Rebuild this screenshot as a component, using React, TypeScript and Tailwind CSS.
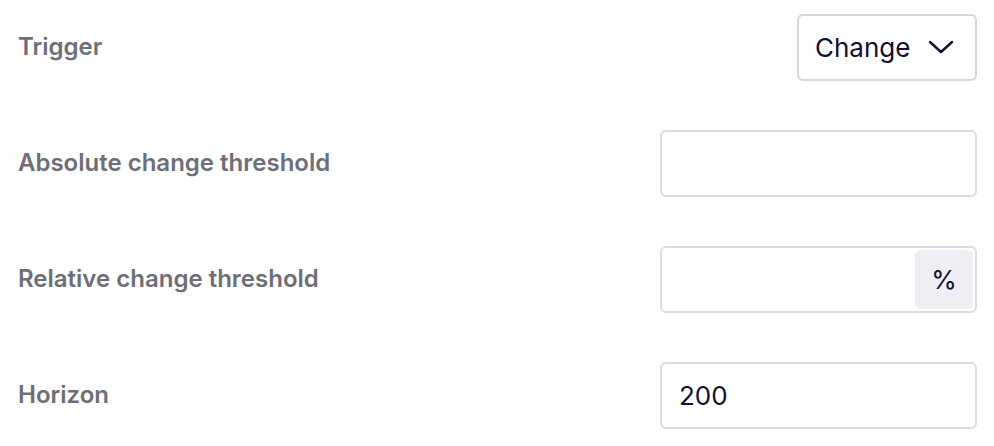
import React from "react";

const font = { fontFamily: "Inter, 'Noto Sans', sans-serif" };

function Row({ label, children }: { label: string; children: React.ReactNode }) {
  return (
    <div className="flex h-[116px] items-center justify-between">
      <div className="text-[24px] font-semibold text-[#6e6e78]">{label}</div>
      {children}
    </div>
  );
}

export default function App() {
  return (
    <div className="w-[994px] h-[446px] bg-white pl-[18px] pr-[17px]" style={font}>
      <div className="flex flex-col mt-[-11px]">
        <Row label="Trigger">
          <div className="flex h-[67px] w-[180px] items-center justify-between rounded-[6px] border-2 border-[#d6d6da] pl-[16px] pr-[21px] text-[26px] text-[#130d34]">
            <span>Change</span>
            <svg width="26" height="14" viewBox="0 0 26 14" fill="none">
              <path d="M2 2 L13 12 L24 2" stroke="#130d34" strokeWidth="2.4" strokeLinecap="round" strokeLinejoin="round" />
            </svg>
          </div>
        </Row>
        <Row label="Absolute change threshold">
          <div className="h-[67px] w-[317px] rounded-[6px] border-2 border-[#dcdcde]" />
        </Row>
        <Row label="Relative change threshold">
          <div className="flex h-[67px] w-[317px] items-center justify-end rounded-[6px] border-2 border-[#dcdcde] p-[2px]">
            <div className="flex h-[59px] w-[58px] items-center justify-center rounded-[6px] bg-[#efeef4] text-[26px] text-[#130d34]">%</div>
          </div>
        </Row>
        <Row label="Horizon">
          <div className="flex h-[67px] w-[317px] items-center rounded-[6px] border-2 border-[#dcdcde] pl-[17px] text-[26px] text-[#130d34]">200</div>
        </Row>
      </div>
    </div>
  );
}
